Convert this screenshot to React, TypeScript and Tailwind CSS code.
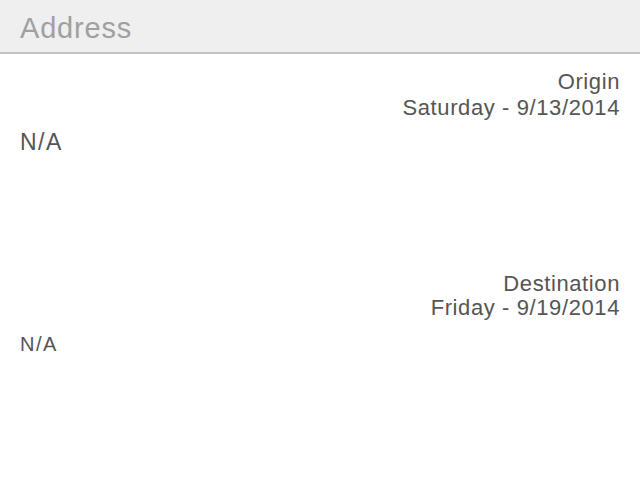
export default function App() {
  return (
    <div className="w-[640px] h-[488px] bg-white overflow-hidden text-[#555555]" style={{ fontFamily: '"Liberation Sans", Arial, sans-serif' }}>
      {/* header */}
      <div className="h-[54px] bg-[#efefef] border-b-2 border-[#c2c2c2] px-5 flex items-center">
        <span className="text-[29px] tracking-[0.8px] text-[#a0a0a0] leading-none mt-[4px]">Address</span>
      </div>

      {/* origin */}
      <div className="flex flex-col items-end pr-[20px] mt-[15px] text-[22px] tracking-[0.6px] leading-[26px]">
        <span>Origin</span>
        <span>Saturday - 9/13/2014</span>
      </div>
      <div className="px-5 mt-[8px] text-[23px] tracking-[1.5px] leading-[26px]">N/A</div>

      {/* destination */}
      <div className="flex flex-col items-end pr-[20px] mt-[117px] text-[22px] tracking-[0.6px] leading-[24px]">
        <span>Destination</span>
        <span>Friday - 9/19/2014</span>
      </div>
      <div className="px-5 mt-[12px] text-[20px] tracking-[1.5px] leading-[24px]">N/A</div>
    </div>
  );
}
